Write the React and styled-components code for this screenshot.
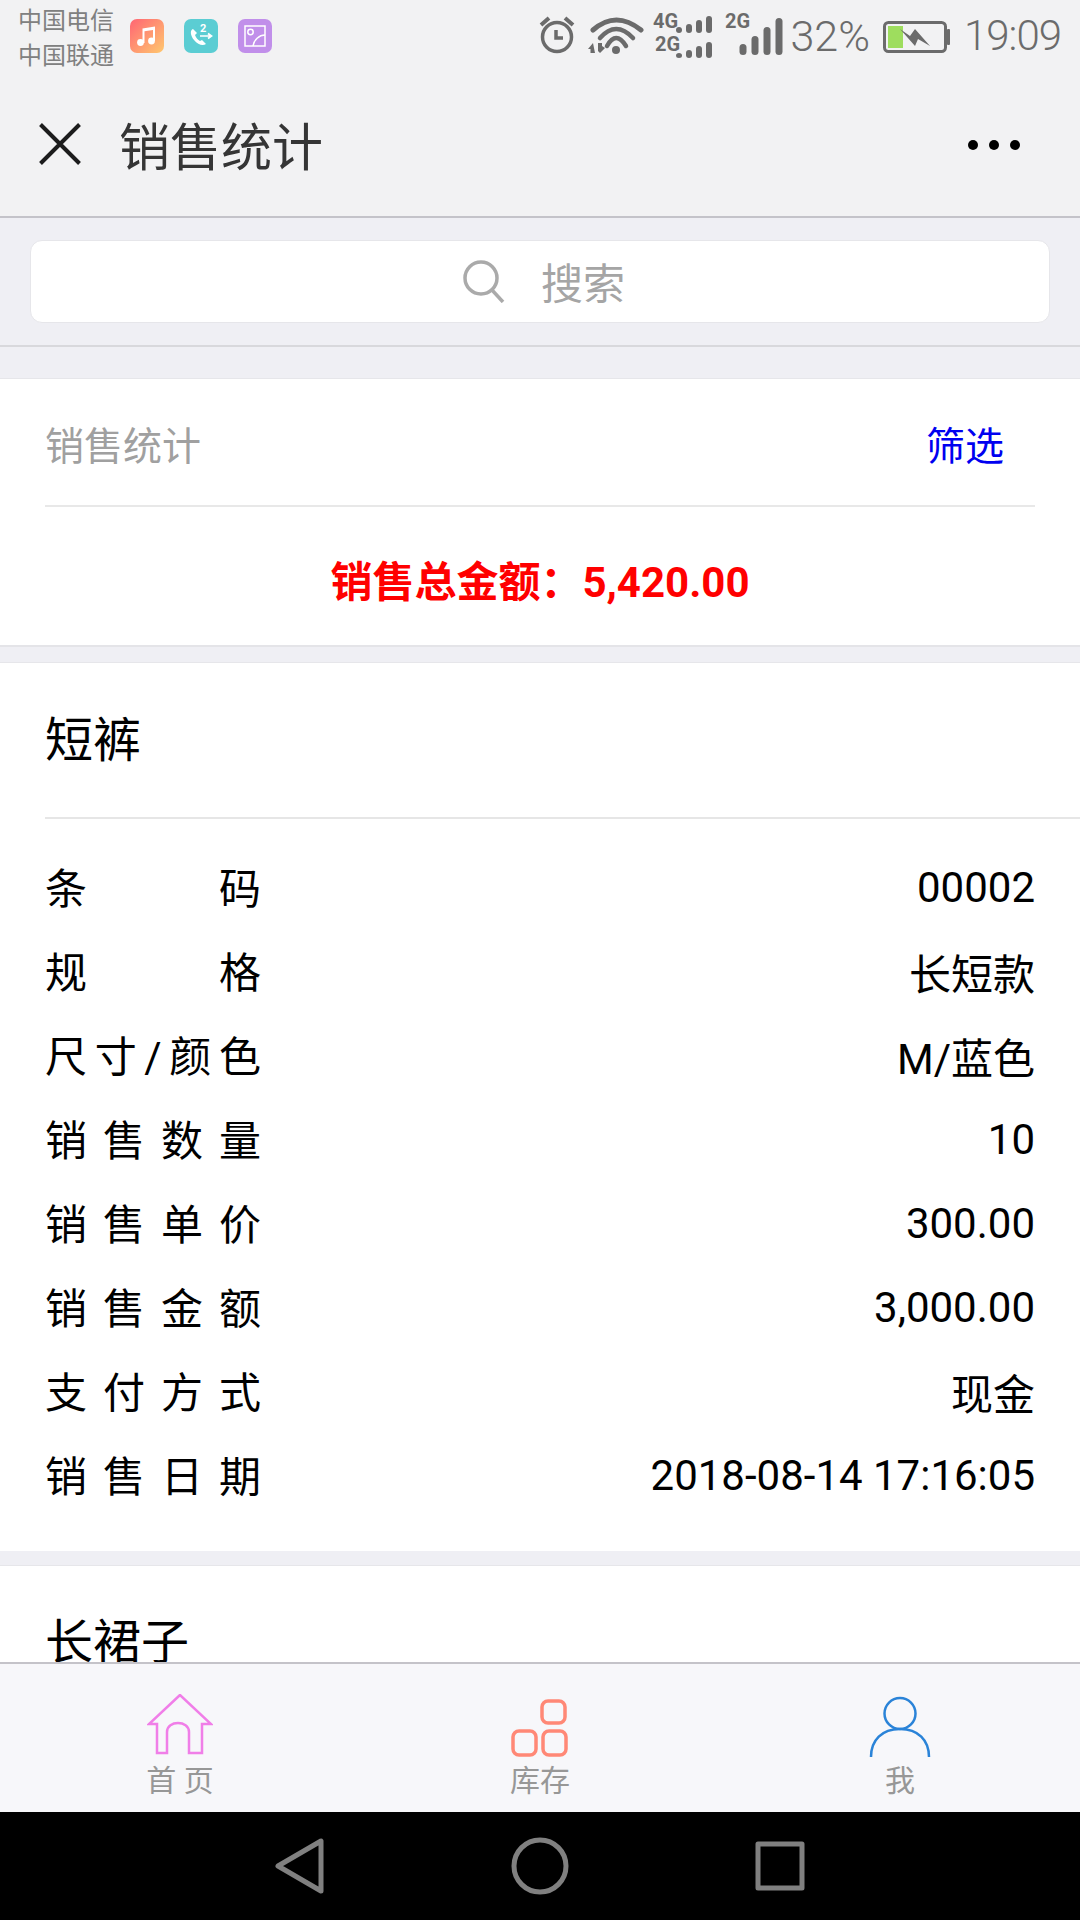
import React from 'react'
import styled, { createGlobalStyle } from 'styled-components'

const GlobalStyle = createGlobalStyle`
  html, body { margin: 0; padding: 0; background: #efeff4; }
  * { box-sizing: border-box; }
`

const FONT = `Roboto, "Noto Sans CJK SC", sans-serif`

const Screen = styled.div`
  width: 1080px;
  height: 1920px;
  display: flex;
  flex-direction: column;
  overflow: hidden;
  font-family: ${FONT};
  background: #efeff4;
`

const TopArea = styled.header`
  height: 218px;
  flex: none;
  background: #f2f2f3;
  border-bottom: 2px solid #c4c3c9;
`

const StatusBar = styled.div`
  height: 72px;
  display: flex;
  align-items: center;
  padding: 0 19px 0 18px;
`

const Carriers = styled.div`
  width: 112px;
  font-size: 24px;
  line-height: 35px;
  color: #808080;
  margin-top: 6px;
`

const AppIcons = styled.div`
  display: flex;
  gap: 20px;
`

const AppIcon = styled.svg`
  display: block;
  width: 34px;
  height: 34px;
  border-radius: 7px;
  background: ${p => p.$bg};
`

const StatusRight = styled.div`
  margin-left: auto;
  display: flex;
  align-items: center;
  color: #6b6b6b;
`

const StatusGlyph = styled.svg`
  display: block;
  flex: none;
  margin-right: ${p => p.$right || 0}px;
`

const Percent = styled.span`
  font-size: 43px;
  font-weight: 300;
  line-height: 72px;
  margin: 0 13px 0 6px;
`

const Clock = styled.span`
  font-size: 42px;
  font-weight: 300;
  line-height: 72px;
  letter-spacing: -1px;
  margin-left: 13px;
`

const NavRow = styled.div`
  height: 144px;
  display: flex;
  align-items: center;
  padding: 0 23px 0 39px;
`

const PageTitle = styled.h1`
  margin: 0 0 0 38px;
  font-size: 51px;
  font-weight: 400;
  color: #353535;
`

const MoreDots = styled.div`
  margin-left: auto;
  margin-top: 2px;
  margin-right: 37px;
  display: flex;
  gap: 11px;
`

const Dot = styled.i`
  width: 10px;
  height: 10px;
  border-radius: 50%;
  background: #000;
`

const SearchSection = styled.div`
  flex: none;
  height: 129px;
  padding: 22px 30px 0;
  border-bottom: 2px solid #d8d8dc;
`

const SearchBox = styled.div`
  height: 83px;
  background: #fff;
  border: 1px solid #e6e6ea;
  border-radius: 12px;
  display: flex;
  align-items: center;
  justify-content: center;
  gap: 35px;
  font-size: 42px;
  color: #a5a5a5;
  padding: 0 0 2px 7px;
`

const Scroll = styled.main`
  flex: 1;
  min-height: 0;
  overflow: hidden;
  padding-top: 31px;
`

const Card = styled.section`
  background: #fff;
  border-top: 1px solid #e6e6ea;
  border-bottom: ${p => (p.$edge ? '2px solid #e4e4e8' : 'none')};
  margin-bottom: ${p => p.$gap || 0}px;
`

const FilterRow = styled.div`
  margin: 0 45px;
  height: 128px;
  padding-top: 2px;
  display: flex;
  align-items: center;
  justify-content: space-between;
  border-bottom: 2px solid #e8e8e8;
  font-size: 39px;
  color: #a0a0a0;
`

const FilterLink = styled.span`
  color: #0000f0;
  margin-right: 31px;
`

const Total = styled.div`
  height: 138px;
  padding-top: 4px;
  display: flex;
  align-items: center;
  justify-content: center;
  font-size: 42px;
  font-weight: 700;
  color: #ff0000;
`

const ItemTitle = styled.div`
  margin-left: 45px;
  height: 156px;
  padding-bottom: ${p => p.$lift}px;
  display: flex;
  align-items: center;
  font-size: 48px;
  color: #000;
  border-bottom: ${p => (p.$line ? '2px solid #e6e6e6' : 'none')};
`

const Rows = styled.div`
  padding: 26px 45px 34px;
`

const Row = styled.div`
  height: 84px;
  display: flex;
  align-items: center;
  justify-content: space-between;
  font-size: 42px;
  color: #000;
`

const Label = styled.span`
  width: 216px;
  margin-bottom: 4px;
  text-align: justify;
  text-align-last: justify;
`

const TabBar = styled.nav`
  flex: none;
  height: 150px;
  background: #f7f7fa;
  border-top: 2px solid #c4c3c9;
  display: grid;
  grid-template-columns: repeat(3, 1fr);
`

const Tab = styled.div`
  display: flex;
  flex-direction: column;
  align-items: center;
  font-size: 30px;
  line-height: 40px;
  color: #979797;
  padding-top: 30px;
`

const TabIcon = styled.svg`
  display: block;
  height: 64px;
  width: 66px;
  margin-bottom: 3px;
`

const AndroidBar = styled.div`
  flex: none;
  height: 108px;
  background: #000;
  display: flex;
  align-items: center;
  justify-content: center;
  gap: 180px;
`

const rows = [
  ['条码', '00002'],
  ['规格', '长短款'],
  ['尺寸/颜色', 'M/蓝色'],
  ['销售数量', '10'],
  ['销售单价', '300.00'],
  ['销售金额', '3,000.00'],
  ['支付方式', '现金'],
  ['销售日期', '2018-08-14 17:16:05'],
]

const GREY = '#6b6b6b'

const Bars = ({ w = 6, items }) =>
  items.map(([x, y1, y2]) => (
    <rect key={`${x}-${y1}`} x={x} y={y1} width={w} height={y2 - y1} rx={w / 2} />
  ))

const StatusIcons = () => (
  <>
    <StatusGlyph $right={11} width="38" height="44" viewBox="0 0 38 44" fill="none" stroke={GREY} strokeWidth="3.5">
      <circle cx="19" cy="23" r="14.5" />
      <path d="M18 16v8h7" />
      <path d="M3 11l8-7M35 11l-8-7" strokeWidth="4" />
    </StatusGlyph>
    <StatusGlyph $right={7} width="57" height="44" viewBox="0 0 57 44" fill="none" stroke={GREY} strokeWidth="4.5" strokeLinecap="round">
      <path d="M6 16Q29-4 54 16" strokeWidth="5" />
      <path d="M13 24Q29 6 46 24" />
      <path d="M20 32Q29 16 39 32" />
      <circle cx="29" cy="36" r="4" fill={GREY} stroke="none" />
      <path d="M6 29L1 35h2.5v4h4.5zM11 29h4v3l3 2-5 5-2-2z" fill={GREY} stroke="none" />
    </StatusGlyph>
    <StatusGlyph $right={10} width="63" height="54" viewBox="0 0 63 54" fill={GREY}>
      <text x="2" y="18.7" fontSize="20" fontWeight="700" fontFamily="Roboto">4G</text>
      <text x="4" y="42" fontSize="20" fontWeight="700" fontFamily="Roboto">2G</text>
      <Bars items={[[25, 18, 24], [35, 15, 24], [45, 11, 24], [55, 7, 24], [25, 44, 49], [35, 41, 49], [45, 37, 49], [55, 33, 49]]} />
    </StatusGlyph>
    <StatusGlyph width="60" height="54" viewBox="0 0 60 54" fill={GREY}>
      <text x="1" y="18.7" fontSize="20" fontWeight="700" fontFamily="Roboto">2G</text>
      <Bars w={7} items={[[15.5, 35, 46], [27.5, 27, 46], [39.5, 18, 46], [51.5, 9, 46]]} />
    </StatusGlyph>
    <Percent>32%</Percent>
    <StatusGlyph width="68" height="36" viewBox="0 0 68 36">
      <rect x="1.5" y="4.5" width="61" height="29" rx="4" fill="none" stroke={GREY} strokeWidth="3" />
      <rect x="64" y="11" width="3" height="16" rx="1" fill={GREY} />
      <rect x="5" y="8" width="15" height="22" fill="#9edd5e" />
      <path d="M17 11l10 7 5-7 15 17-12-7-3 7z" fill={GREY} />
    </StatusGlyph>
    <Clock>19:09</Clock>
  </>
)

const App = () => {
  return (
    <Screen>
      <GlobalStyle />
      <TopArea>
        <StatusBar>
          <Carriers>中国电信<br />中国联通</Carriers>
          <AppIcons>
            <AppIcon $bg="linear-gradient(135deg, #ff6574, #ffc86e)" viewBox="0 0 34 34" fill="#fff">
              <circle cx="10.5" cy="23.5" r="3.4" />
              <circle cx="21.5" cy="22" r="3.4" />
              <path d="M12.5 24V9.5L25 7.5V22h-2V11l-8.5 1.3V24z" />
            </AppIcon>
            <AppIcon $bg="#5bcdd3" viewBox="0 0 34 34" fill="#fff">
              <path d="M9 10c-3 1-3 6 1 11 4 5 9 6 12 4l-4-4-2 1c-2-1-4-3-5-6l2-2z" />
              <path d="M16 17h11M24 14.5l3.5 2.5-3.5 2.5" fill="none" stroke="#fff" strokeWidth="1.7" />
              <text x="16" y="13" fontSize="11" fontWeight="700" fontFamily="Roboto">2</text>
            </AppIcon>
            <AppIcon $bg="#c18fea" viewBox="0 0 34 34" fill="none" stroke="#fff" strokeWidth="1.5">
              <rect x="7" y="7" width="20" height="20" />
              <circle cx="12.5" cy="13" r="2.7" />
              <path d="M15 27c1-6 6-11 12-11" />
            </AppIcon>
          </AppIcons>
          <StatusRight><StatusIcons /></StatusRight>
        </StatusBar>
        <NavRow>
          <svg width="42" height="42" viewBox="0 0 42 42" stroke="#1c1c1c" strokeWidth="4" fill="none">
            <path d="M1.5 1.5l39 39M40.5 1.5l-39 39" />
          </svg>
          <PageTitle>销售统计</PageTitle>
          <MoreDots><Dot /><Dot /><Dot /></MoreDots>
        </NavRow>
      </TopArea>

      <SearchSection>
        <SearchBox>
          <svg width="44" height="44" viewBox="0 0 44 44" fill="none" stroke="#aaa" strokeWidth="3.5">
            <circle cx="19" cy="19" r="16" />
            <path d="M30 31l11 12" />
          </svg>
          搜索
        </SearchBox>
      </SearchSection>

      <Scroll>
        <Card $edge $gap={15}>
          <FilterRow>
            销售统计
            <FilterLink>筛选</FilterLink>
          </FilterRow>
          <Total>销售总金额：5,420.00</Total>
        </Card>
        <Card $gap={14}>
          <ItemTitle $line $lift={8}>短裤</ItemTitle>
          <Rows>
            {rows.map(([k, v]) => (
              <Row key={k}>
                <Label>{k}</Label>
                <span>{v}</span>
              </Row>
            ))}
          </Rows>
        </Card>
        <Card>
          <ItemTitle $lift={12}>长裙子</ItemTitle>
        </Card>
      </Scroll>

      <TabBar>
        <Tab>
          <TabIcon viewBox="0 0 66 64" fill="none" stroke="#f07ee8" strokeWidth="2.5">
            <path d="M33 1L2 30h8v29h10V38c0-12 22-12 22 0v21h13V30h9z" />
          </TabIcon>
          首 页
        </Tab>
        <Tab>
          <TabIcon viewBox="0 0 66 64" fill="none" stroke="#ff8876" strokeWidth="3.5">
            <rect x="35" y="7" width="23" height="22" rx="6" />
            <rect x="6" y="37" width="23" height="24" rx="6" />
            <rect x="36" y="37" width="23" height="24" rx="6" />
          </TabIcon>
          库存
        </Tab>
        <Tab>
          <TabIcon viewBox="0 0 66 64" fill="none" stroke="#2a83d8" strokeWidth="2.5">
            <circle cx="33" cy="19.5" r="15.5" />
            <path d="M4 63C4 46 15 35 33 35s29 11 29 28" />
          </TabIcon>
          我
        </Tab>
      </TabBar>

      <AndroidBar>
        <svg width="60" height="60" viewBox="0 0 60 60" fill="none" stroke="#808080" strokeWidth="5" strokeLinejoin="round">
          <path d="M51 5v50L8 30z" />
        </svg>
        <svg width="60" height="60" viewBox="0 0 60 60" fill="none" stroke="#808080" strokeWidth="5">
          <circle cx="30" cy="30" r="26" />
        </svg>
        <svg width="60" height="60" viewBox="0 0 60 60" fill="none" stroke="#808080" strokeWidth="5" strokeLinejoin="round">
          <rect x="8" y="8" width="44" height="44" />
        </svg>
      </AndroidBar>
    </Screen>
  )
}

export default App
